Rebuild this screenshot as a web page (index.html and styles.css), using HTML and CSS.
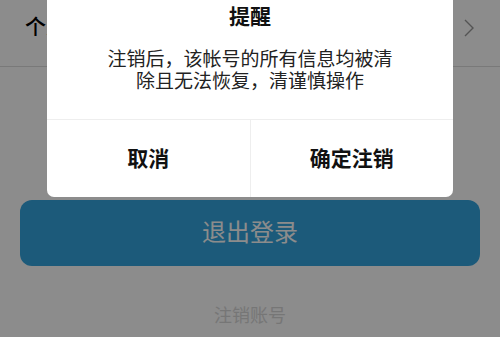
FILE: index.html
```html
<!DOCTYPE html>
<html lang="zh">

<head>
    <title>设置</title>
    <link rel="stylesheet" href="styles.css">
</head>

<body>
    <div class="page">
        <div class="row">
            <span class="row-label">个人信息</span>
            <svg class="chevron" width="10" height="18" viewBox="0 0 10 18">
                <path d="M1 1 L9 9 L1 17" fill="none" stroke="#999" stroke-width="1.4" />
            </svg>
        </div>
        <button class="logout">退出登录</button>
        <a class="cancel-account">注销账号</a>
    </div>

    <div class="mask"></div>

    <div class="dialog">
        <div class="dialog-title">提醒</div>
        <div class="dialog-msg">注销后，该帐号的所有信息均被清除且无法恢复，清谨慎操作</div>
        <div class="dialog-actions">
            <div class="action">取消</div>
            <div class="action">确定注销</div>
        </div>
    </div>
</body>

</html>
```

FILE: styles.css
```css
body {
    margin: 0;
    width: 500px;
    height: 337px;
    overflow: hidden;
    background-color: #fff;
    font-family: "Noto Sans CJK SC", "Noto Sans", sans-serif;
    position: relative;
}

div.page {
    display: flex;
    flex-direction: column;
}

div.row {
    height: 67px;
    display: flex;
    align-items: center;
    justify-content: space-between;
    padding: 0 26px 0 25px;
    border-bottom: 1px solid #ddd;
    box-sizing: border-box;
}

span.row-label {
    margin-top: -16px;
    font-size: 21px;
    font-weight: 500;
    color: #000;
}

svg.chevron {
    margin-top: -10px;
}

button.logout {
    margin: 133px 20px 0;
    height: 66px;
    border: none;
    border-radius: 12px;
    background-color: #33a4de;
    color: #fff;
    font-family: inherit;
    font-size: 24px;
    padding: 0 0 5px;
}

a.cancel-account {
    margin-top: 35px;
    text-align: center;
    font-size: 18px;
    color: #d8d8d8;
}

div.mask {
    position: absolute;
    left: 0;
    top: 0;
    right: 0;
    bottom: 0;
    background-color: rgba(0, 0, 0, 0.45);
}

div.dialog {
    position: absolute;
    left: 47px;
    top: 0;
    width: 406px;
    background-color: #fff;
    border-radius: 0 0 7px 7px;
    display: flex;
    flex-direction: column;
}

div.dialog-title {
    padding-top: 2px;
    line-height: 26px;
    font-size: 21px;
    font-weight: bold;
    text-align: center;
    color: #111;
}

div.dialog-msg {
    padding: 19px 55px 28px;
    line-height: 22px;
    font-size: 19px;
    text-align: center;
    color: #222;
}

div.dialog-actions {
    display: flex;
    border-top: 1px solid #eee;
    height: 77px;
}

div.action {
    flex: 1;
    display: flex;
    align-items: center;
    justify-content: center;
    padding-bottom: 4px;
    font-size: 21px;
    font-weight: bold;
    color: #111;
}

div.action + div.action {
    border-left: 1px solid #eee;
}
```
